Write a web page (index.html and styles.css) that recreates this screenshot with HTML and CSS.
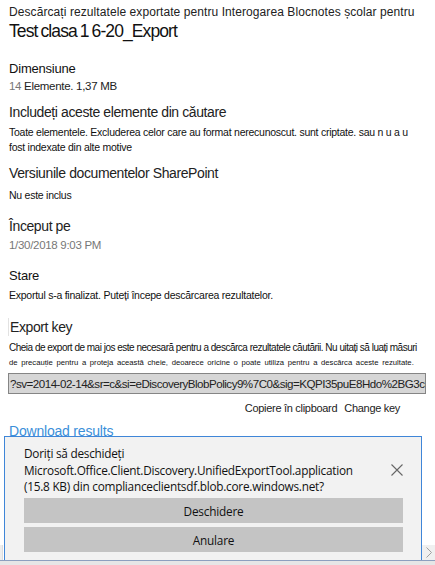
FILE: index.html
```html
<!DOCTYPE html>
<html lang="ro">
<head>
	<meta charset="UTF-8"/>
	<title>Export</title>
	<link rel="stylesheet" href="styles.css">
</head>
<body>
<div class="pane">
	<p class="pane_sub">Descărcați rezultatele exportate pentru Interogarea Blocnotes școlar pentru</p>
	<h1 class="pane_title">Test clasa 1 6-20_Export</h1>

	<h3 class="label sp_dim">Dimensiune</h3>
	<p class="val"><span class="muted">14</span> Elemente. 1,37 MB</p>

	<h2 class="head sp_inc">Includeți aceste elemente din căutare</h2>
	<p class="text">Toate elementele. Excluderea celor care au format nerecunoscut. sunt criptate. sau n u a u<br/>fost indexate din alte motive</p>

	<h2 class="head sp_ver">Versiunile documentelor SharePoint</h2>
	<p class="text sp_nu">Nu este inclus</p>

	<h2 class="head sp_inc2">Început pe</h2>
	<p class="val muted sp_date">1/30/2018 9:03 PM</p>

	<h3 class="label sp_stare">Stare</h3>
	<p class="text">Exportul s-a finalizat. Puteți începe descărcarea rezultatelor.</p>

	<h2 class="head key_head">Export key</h2>
	<p class="text key_text">Cheia de export de mai jos este necesară pentru a descărca rezultatele căutării. Nu uitați să luați măsuri</p>
	<p class="key_small">de precauție pentru a proteja această cheie, deoarece oricine o poate utiliza pentru a descărca aceste rezultate.</p>
	<div class="key_box">?sv=2014-02-14&amp;sr=c&amp;si=eDiscoveryBlobPolicy9%7C0&amp;sig=KQPI35puE8Hdo%2BG3c8yT0mXq</div>
	<div class="key_links">
		<a href="#">Copiere în clipboard</a>
		<a href="#">Change key</a>
	</div>
	<a class="download" href="#">Download results</a>
</div>

<!-- bara de descărcare, peste pagină -->
<div class="notify">
	<div class="notify_top">
		<p class="notify_msg">Doriți să deschideți<br/>Microsoft.Office.Client.Discovery.UnifiedExportTool.application<br/>(15.8 KB) din complianceclientsdf.blob.core.windows.net?</p>
		<svg class="notify_close" width="12" height="12" viewBox="0 0 12 12"><path d="M0.5 0.5L11.5 11.5M11.5 0.5L0.5 11.5" stroke="#666" stroke-width="1.1" fill="none"/></svg>
	</div>
	<button class="notify_btn">Deschidere</button>
	<button class="notify_btn">Anulare</button>
</div>
<div class="scroll_l"></div>
<div class="scroll_r">
	<svg width="6" height="11" viewBox="0 0 6 11"><path d="M0.5 0.5L5.5 5.5L0.5 10.5" stroke="#a0a0a0" stroke-width="1" fill="none"/></svg>
</div>
<div class="statusbar"></div>
</body>
</html>
```

FILE: styles.css
```css
*{margin:0;padding:0;box-sizing:border-box;}
html,body{height:100%;}
body{font-family:"Liberation Sans",Arial,sans-serif;color:#222;background:#fff;overflow:hidden;position:relative;}
a{text-decoration:none;}

.pane{padding:4px 5px 0 9px;white-space:nowrap;}
.pane_sub{font-size:12px;line-height:16px;color:#222;letter-spacing:0.08px;}
.pane_title{font-size:17.5px;font-weight:normal;line-height:22px;letter-spacing:-0.9px;word-spacing:-1px;color:#111;}

.label{font-size:13px;font-weight:normal;line-height:16px;color:#111;letter-spacing:-0.2px;}
.head{font-size:14px;font-weight:normal;line-height:18px;color:#222;letter-spacing:-0.4px;}
.val{font-size:11.5px;line-height:16px;margin-top:1px;letter-spacing:-0.3px;}
.text{font-size:10.5px;line-height:15px;margin-top:3.5px;color:#111;letter-spacing:-0.25px;}
.muted{color:#777;}

.sp_dim{margin-top:19px;}
.sp_inc{margin-top:9px;}
.sp_ver{margin-top:9.5px;}
.sp_nu{margin-top:5.5px;}
.sp_inc2{margin-top:14.5px;}
.sp_date{margin-top:2px;}
.sp_stare{margin-top:15px;}

.key_head{margin-top:15.5px;border-left:1px solid #e2e2e2;margin-left:-1px;padding-left:1px;}
.key_text{font-size:10px;letter-spacing:-0.5px;}
.key_small{font-size:7.7px;line-height:13px;margin-top:1px;color:#111;word-spacing:1.5px;}
.key_box{margin:4.5px 4px 0 -1px;height:21px;border:1px solid #858585;background:#d6d6d6;font-size:11.6px;line-height:19px;padding-left:1px;overflow:hidden;color:#222;letter-spacing:-0.5px;}
.key_links{display:flex;justify-content:flex-end;gap:7px;margin:6px 30px 0 0;font-size:11px;line-height:16px;}
.key_links a{color:#222;letter-spacing:-0.3px;}

.download{display:block;margin-top:6px;font-size:14px;line-height:18px;color:#3a8fd9;letter-spacing:-0.2px;}

.notify{position:absolute;left:4px;top:436px;width:418px;height:124px;background:#f2f2f2;border:1px solid #3f86d8;border-bottom:none;padding:8px 19px 0 19px;}
.notify_top{display:flex;align-items:center;justify-content:space-between;}
.notify_msg{font-family:"Open Sans",sans-serif;font-size:11.8px;line-height:16.5px;color:#111;letter-spacing:-0.25px;white-space:nowrap;}
.notify_close{margin-right:-1px;}
.notify_btn{display:block;width:379px;height:25px;margin-top:4px;border:none;background:#c4c4c4;font-family:"Open Sans",sans-serif;font-size:11.8px;color:#111;letter-spacing:-0.2px;}
.notify_top + .notify_btn{margin-top:3.5px;}

.scroll_l{position:absolute;left:0;top:545px;width:3px;height:15px;background:#eee;border-right:1px solid #ddd;}
.scroll_r{position:absolute;right:0;top:545px;width:13px;height:15px;background:#f0f0f0;display:flex;align-items:center;justify-content:center;}
.statusbar{position:absolute;left:0;right:0;top:560px;height:5px;background:#e6e6e6;border-top:1px solid #8d9fbf;}
```
